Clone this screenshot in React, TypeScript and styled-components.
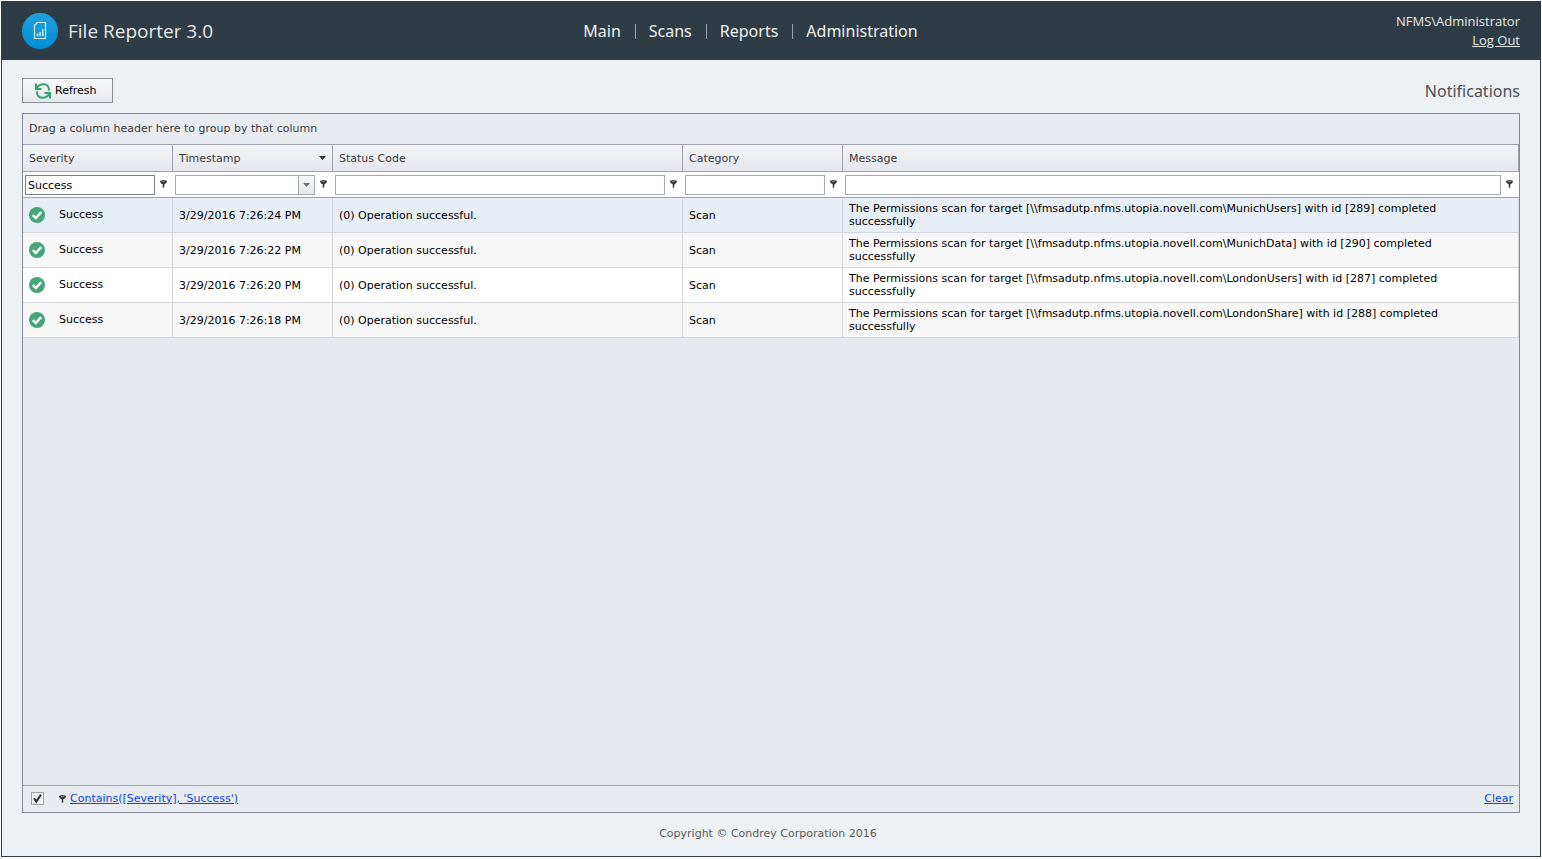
import React, { useState } from 'react';
import styled, { createGlobalStyle } from 'styled-components';

const GlobalStyle = createGlobalStyle`
  *, *::before, *::after { box-sizing: border-box; }
  body {
    margin: 0;
    background: #fff;
    font-family: Verdana, "DejaVu Sans", sans-serif;
    font-size: 11px;
    color: #000;
  }
  button, input { font: inherit; color: inherit; }
`;

const Page = styled.div`
  display: flex;
  padding: 1px 1px 2px;
  min-height: 100vh;
`;

const Frame = styled.div`
  flex: 1;
  min-width: 0;
  display: flex;
  flex-direction: column;
  border: 1px solid #2d3c44;
  background: #edf1f3;
`;

const Header = styled.header`
  display: grid;
  grid-template-columns: 1fr auto 1fr;
  align-items: center;
  height: 58px;
  padding: 0 20px;
  background: #2e3d45;
  color: #e6e9ea;
`;

const Brand = styled.div`
  display: flex;
  align-items: center;
  gap: 10px;
  font-family: "Segoe UI", "Open Sans", sans-serif;
  font-size: 19px;
  line-height: 24px;
`;

const Nav = styled.nav`
  display: flex;
  align-items: center;
  margin-right: 40px;
`;

const NavLink = styled.a`
  padding: 0 14px 0 13px;
  font-family: Tahoma, "Noto Sans", sans-serif;
  font-size: 16px;
  line-height: 24px;
  color: #eef0f1;
  text-decoration: none;
`;

const NavDivider = styled.span`
  width: 1px;
  height: 15px;
  background: #9aa3a7;
`;

const Account = styled.div`
  display: flex;
  flex-direction: column;
  align-items: flex-end;
  font-family: "Segoe UI", "Open Sans", sans-serif;
  font-size: 13px;
  line-height: 19px;
`;

const LogOut = styled.a`
  color: inherit;
`;

const Main = styled.main`
  flex: 1;
  display: flex;
  flex-direction: column;
  gap: 10px;
  padding: 18px 20px 0;
`;

const Toolbar = styled.div`
  display: flex;
  align-items: center;
  justify-content: space-between;
`;

const RefreshButton = styled.button`
  display: flex;
  align-items: center;
  gap: 4px;
  height: 25px;
  padding: 0 15px 0 12px;
  border: 1px solid #8a8d94;
  background: linear-gradient(#f8f8fa, #e6e8ed);
`;

const Title = styled.h1`
  margin: 0;
  font-family: Tahoma, "Noto Sans", sans-serif;
  font-size: 16px;
  font-weight: 400;
  line-height: 24px;
  color: #4d4f53;
`;

const Grid = styled.section`
  flex: 1;
  display: flex;
  flex-direction: column;
  border: 1px solid #868a93;
  background: #e6e9ee;
`;

const GroupPanel = styled.div`
  height: 30px;
  padding: 0 6px;
  line-height: 30px;
  background: #e8ebf0;
  color: #3c3c3c;
`;

const GridBody = styled.div`
  flex: 1;
`;

const Table = styled.table`
  width: 100%;
  table-layout: fixed;
  border-collapse: separate;
  border-spacing: 0;
`;

const Col = styled.col<{ $width?: number }>`
  width: ${({ $width }) => ($width ? `${$width}px` : 'auto')};
`;

const HeadCell = styled.th`
  height: 28px;
  padding: 0 6px;
  border: solid #9da2ad;
  border-width: 1px 1px 1px 0;
  background: linear-gradient(#f4f5f8, #e4e6ec);
  font-weight: 400;
  line-height: 13px;
  text-align: left;
  color: #3c3c3c;
`;

const HeadContent = styled.div`
  display: flex;
  align-items: center;
  justify-content: space-between;
`;

const FilterCell = styled.td`
  height: 26px;
  padding: 0 6px 0 2px;
  border-bottom: 1px solid #9da2ad;
  background: #fff;
`;

const FilterContent = styled.div`
  display: flex;
  align-items: center;
  gap: 5px;
`;

const FilterInput = styled.input<{ $active?: boolean }>`
  flex: 1;
  min-width: 0;
  height: 20px;
  padding: 1px 2px 0;
  border: 1px solid ${({ $active }) => ($active ? '#7c8088' : '#a3a8b3')};
  border-radius: 0;
  background: #fff;
  outline: none;
`;

const DateBox = styled.div`
  flex: 1;
  min-width: 0;
  display: flex;
`;

const DropButton = styled.button`
  display: flex;
  align-items: center;
  justify-content: center;
  width: 17px;
  height: 20px;
  margin-left: -1px;
  padding: 0;
  border: 1px solid #a3a8b3;
  background: linear-gradient(#f8f8fa, #e6e8ed);
`;

const PinButton = styled.button`
  display: flex;
  padding: 0 0 2px;
  border: 0;
  background: none;
`;

const Row = styled.tr<{ $background: string }>`
  background: ${({ $background }) => $background};
`;

const Cell = styled.td`
  height: 35px;
  padding: 0 6px;
  border: solid #d3d7dc;
  border-width: 0 1px 1px 0;
  line-height: 13px;
`;

const MessageCell = styled(Cell)`
  padding-right: 40px;
`;

const Severity = styled.div`
  display: flex;
  align-items: center;
  gap: 14px;
`;

const SeverityName = styled.span`
  padding-bottom: 2px;
`;

const FilterBar = styled.div`
  display: flex;
  align-items: center;
  height: 27px;
  padding: 0 6px 1px 8px;
  border-top: 1px solid #9da2ad;
  background: #e8ebf0;
`;

const FilterToggle = styled.input`
  appearance: none;
  width: 13px;
  height: 13px;
  margin: 0 15px 0 0;
  border: 1px solid #a0a3a8;
  background: #f2f3f5;
  &:checked {
    background: #f2f3f5 url("data:image/svg+xml,%3Csvg xmlns='http://www.w3.org/2000/svg' viewBox='0 0 11 11'%3E%3Cpath d='M2 5.2L4.3 8.6L9 1.6' fill='none' stroke='%23333' stroke-width='2'/%3E%3C/svg%3E") center / 11px 11px;
  }
`;

const FilterLink = styled.a<{ $end?: boolean }>`
  margin-left: ${({ $end }) => ($end ? 'auto' : '4px')};
  line-height: 14px;
  color: #0d45e8;
`;

const Footer = styled.footer`
  height: 43px;
  padding-right: 6px;
  line-height: 42px;
  text-align: center;
  color: #5c5c5c;
`;

const Logo = () => (
  <svg width="36" height="36" viewBox="0 0 36 36" aria-hidden="true">
    <defs>
      <linearGradient id="disc" x1="0" y1="0" x2="0" y2="1">
        <stop offset="0" stopColor="#20a2dd" />
        <stop offset="1" stopColor="#028cd6" />
      </linearGradient>
    </defs>
    <circle cx="18" cy="18" r="18" fill="url(#disc)" />
    <path d="M15.5 9.5H23.5V25.5H12.5V12.5Z" fill="none" stroke="#d8eefa" strokeWidth="1.2" strokeLinejoin="round" />
    <path d="M15.5 23.2V20.5M18 23.2V19M20.7 23.2V16" stroke="#d8eefa" strokeWidth="1.5" />
  </svg>
);

const RefreshIcon = () => (
  <svg width="16" height="16" viewBox="0 0 16 16" aria-hidden="true">
    <g fill="none" stroke="#35a06e" strokeWidth="2">
      <path d="M1 .5V6H6.5" />
      <path d="M1.5 5.5C4.5 0 11.8 .2 13.4 4.2Q14 5.6 14 7.6" />
      <path d="M15 15.5V10H9.5" />
      <path d="M14.5 10.5C11.5 16 4.2 15.8 2.6 11.8Q2 10.4 2 8.4" />
    </g>
  </svg>
);

const CheckIcon = () => (
  <svg width="16" height="16" viewBox="0 0 16 16" aria-hidden="true">
    <circle cx="8" cy="8" r="8" fill="#45a67b" />
    <path d="M3.8 8.2L6.8 11L12.2 5.2" fill="none" stroke="#fff" strokeWidth="2.5" />
  </svg>
);

const PinIcon = () => (
  <svg width="7" height="8" viewBox="0 0 7 8" aria-hidden="true">
    <path d="M0 1.6Q0 0 3.5 0T7 1.6Q7 3.2 4.3 4.6V7.2L2.8 8V4.6Q0 3.2 0 1.6Z" fill="#383838" />
    <path d="M2 1.4H5" stroke="#a8a8a8" strokeWidth=".8" />
  </svg>
);

const Arrow = ({ color }: { color: string }) => (
  <svg width="7" height="4" viewBox="0 0 7 4" aria-hidden="true">
    <path d="M0 0H7L3.5 4Z" fill={color} />
  </svg>
);

const menu = ['Main', 'Scans', 'Reports', 'Administration'];

const columns: { name: string; width?: number }[] = [
  { name: 'Severity', width: 150 },
  { name: 'Timestamp', width: 160 },
  { name: 'Status Code', width: 350 },
  { name: 'Category', width: 160 },
  { name: 'Message' },
];

const entries = [
  { time: '3/29/2016 7:26:24 PM', share: 'MunichUsers', id: 289 },
  { time: '3/29/2016 7:26:22 PM', share: 'MunichData', id: 290 },
  { time: '3/29/2016 7:26:20 PM', share: 'LondonUsers', id: 287 },
  { time: '3/29/2016 7:26:18 PM', share: 'LondonShare', id: 288 },
];

const rowBackground = (index: number) => (index === 0 ? '#e7eef5' : index % 2 ? '#f7f7f7' : '#fff');

export default function App() {
  const [enabled, setEnabled] = useState(true);
  return (
    <>
      <GlobalStyle />
      <Page>
        <Frame>
          <Header>
            <Brand><Logo />File Reporter 3.0</Brand>
            <Nav>
              {menu.map((item, index) => (
                <React.Fragment key={item}>
                  {index > 0 && <NavDivider />}
                  <NavLink href="#">{item}</NavLink>
                </React.Fragment>
              ))}
            </Nav>
            <Account>
              <span>NFMS\Administrator</span>
              <LogOut href="#">Log Out</LogOut>
            </Account>
          </Header>
          <Main>
            <Toolbar>
              <RefreshButton type="button"><RefreshIcon />Refresh</RefreshButton>
              <Title>Notifications</Title>
            </Toolbar>
            <Grid>
              <GroupPanel>Drag a column header here to group by that column</GroupPanel>
              <GridBody>
                <Table>
                  <colgroup>
                    {columns.map(({ name, width }) => <Col key={name} $width={width} />)}
                  </colgroup>
                  <thead>
                    <tr>
                      {columns.map(({ name }) => (
                        <HeadCell key={name} scope="col">
                          <HeadContent>
                            {name}
                            {name === 'Timestamp' && <Arrow color="#333" />}
                          </HeadContent>
                        </HeadCell>
                      ))}
                    </tr>
                    <tr>
                      {columns.map(({ name }) => (
                        <FilterCell key={name}>
                          <FilterContent>
                            {name === 'Timestamp' ? (
                              <DateBox>
                                <FilterInput aria-label="Filter Timestamp" />
                                <DropButton type="button" aria-label="Choose date"><Arrow color="#6b6e75" /></DropButton>
                              </DateBox>
                            ) : (
                              <FilterInput
                                aria-label={`Filter ${name}`}
                                $active={name === 'Severity'}
                                defaultValue={name === 'Severity' ? 'Success' : ''}
                              />
                            )}
                            <PinButton type="button" aria-label={`${name} filter options`}><PinIcon /></PinButton>
                          </FilterContent>
                        </FilterCell>
                      ))}
                    </tr>
                  </thead>
                  <tbody>
                    {entries.map(({ time, share, id }, index) => (
                      <Row key={id} $background={rowBackground(index)}>
                        <Cell><Severity><CheckIcon /><SeverityName>Success</SeverityName></Severity></Cell>
                        <Cell>{time}</Cell>
                        <Cell>(0) Operation successful.</Cell>
                        <Cell>Scan</Cell>
                        <MessageCell>{`The Permissions scan for target [\\\\fmsadutp.nfms.utopia.novell.com\\${share}] with id [${id}] completed successfully`}</MessageCell>
                      </Row>
                    ))}
                  </tbody>
                </Table>
              </GridBody>
              <FilterBar>
                <FilterToggle
                  type="checkbox"
                  aria-label="Enable filter"
                  checked={enabled}
                  onChange={(event) => setEnabled(event.target.checked)}
                />
                <PinIcon />
                <FilterLink href="#">Contains([Severity], 'Success')</FilterLink>
                <FilterLink href="#" $end>Clear</FilterLink>
              </FilterBar>
            </Grid>
          </Main>
          <Footer>Copyright © Condrey Corporation 2016</Footer>
        </Frame>
      </Page>
    </>
  );
}
